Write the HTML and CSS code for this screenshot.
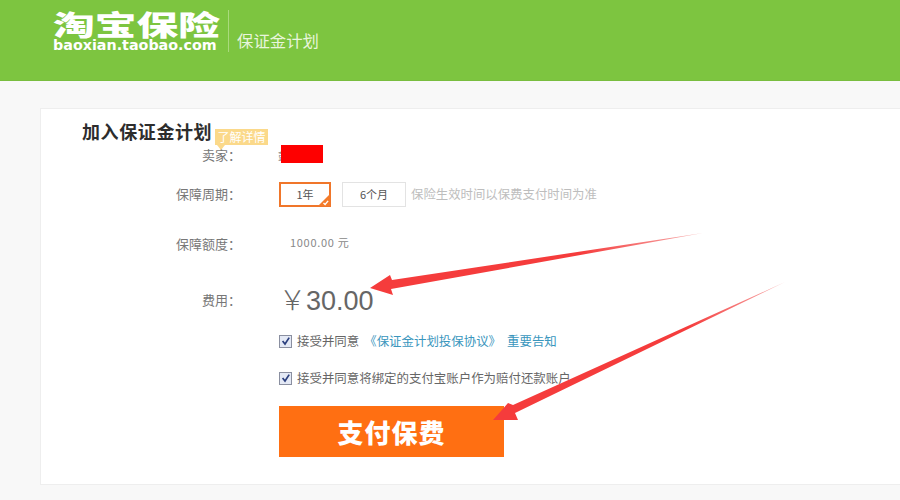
FILE: index.html
```html
<!DOCTYPE html>
<html lang="zh-CN">
<head>
<meta charset="utf-8">
<title>保证金计划</title>
<link rel="stylesheet" href="styles.css">
</head>
<body>
<header class="top">
  <div class="logo">
    <div class="logo-cn">淘宝保险</div>
    <div class="logo-en">baoxian.taobao.com</div>
  </div>
  <div class="top-title">保证金计划</div>
</header>
<main class="page">
  <section class="card">
    <div class="heading">
      <h1>加入保证金计划</h1>
      <span class="tip">了解详情</span>
    </div>
    <div class="row row-seller">
      <div class="label">卖家：</div>
      <div class="value"><span class="seller-char">彭</span><span class="redact"></span></div>
    </div>
    <div class="row row-period">
      <div class="label">保障周期：</div>
      <div class="value period">
        <span class="opt opt-on">1年<svg class="tick" viewBox="0 0 12 12" width="12" height="12"><path d="M12 0V12H0Z" fill="#f47b2a"/><path d="M5.5 9l1.6 1.5 3-3.6" fill="none" stroke="#fff" stroke-width="1.4"/></svg></span>
        <span class="opt">6个月</span>
        <span class="hint">保险生效时间以保费支付时间为准</span>
      </div>
    </div>
    <div class="row row-amount">
      <div class="label">保障额度：</div>
      <div class="value amount">1000.00 元</div>
    </div>
    <div class="row row-fee">
      <div class="label">费用：</div>
      <div class="value fee"><span class="yen">￥</span>30.00</div>
    </div>
    <label class="check check-a"><span class="box"><svg viewBox="0 0 12 12" width="12" height="12"><path d="M2.6 6l2.4 3 4.2-6.4" fill="none" stroke="#2b3f7e" stroke-width="1.7"/></svg></span>接受并同意<a class="link link-first">《保证金计划投保协议》</a><a class="link">重要告知</a></label>
    <label class="check check-b"><span class="box"><svg viewBox="0 0 12 12" width="12" height="12"><path d="M2.6 6l2.4 3 4.2-6.4" fill="none" stroke="#2b3f7e" stroke-width="1.7"/></svg></span>接受并同意将绑定的支付宝账户作为赔付还款账户</label>
    <button class="pay" type="button">支付保费</button>
  </section>
</main>
<svg class="arrows" viewBox="0 0 900 500" width="900" height="500" aria-hidden="true">
  <defs>
    <linearGradient id="fade1" gradientUnits="userSpaceOnUse" x1="703" y1="233" x2="580" y2="255"><stop offset="0" stop-color="#f7b0b0"/><stop offset="1" stop-color="#f53c3c"/></linearGradient>
    <linearGradient id="fade2" gradientUnits="userSpaceOnUse" x1="785" y1="282" x2="690" y2="332"><stop offset="0" stop-color="#f7b0b0"/><stop offset="1" stop-color="#f53c3c"/></linearGradient>
  </defs>
  <path d="M703 233 L392 280 L390 275 L370 288 L393 295 L391 289 Z" fill="url(#fade1)"/>
  <path d="M785 282 L513 405 L508 403 L493 420 L518 420 L515 413 Z" fill="url(#fade2)"/>
</svg>
</body>
</html>
```
FILE: styles.css
```css
* { box-sizing: border-box; }
html, body { margin: 0; padding: 0; }
body {
  width: 900px;
  height: 500px;
  overflow: hidden;
  position: relative;
  background: #f8f8f8;
  font-family: "Liberation Sans", "Noto Sans CJK SC", sans-serif;
  font-size: 12px;
  color: #666;
}
.top {
  height: 81px;
  background: #7dc540;
  display: flex;
  padding-left: 53px;
  color: #fff;
  border-bottom: 1px solid #79bd3f;
}
.logo {
  width: 176px;
  height: 42px;
  margin-top: 10px;
  border-right: 1px solid #a9da7d;
}
.logo-cn {
  font-family: "Noto Sans CJK SC", sans-serif;
  font-weight: 900;
  font-size: 28px;
  line-height: 28px;
  height: 28px;
  white-space: nowrap;
  transform: scaleX(1.49);
  transform-origin: left center;
}
.logo-en {
  font-family: "DejaVu Sans", sans-serif;
  font-weight: 700;
  font-size: 14.3px;
  line-height: 14px;
  white-space: nowrap;
}
.top-title {
  margin: 31px 0 0 8px;
  font-family: "Noto Sans CJK SC", sans-serif;
  font-size: 16.4px;
  line-height: 18px;
  color: #e8f5dc;
}
.page { padding: 27px 0 0 40px; }
.card {
  width: 880px;
  height: 377px;
  background: #fff;
  border: 1px solid #eee;
  padding: 12px 0 0 0;
  font-family: "Noto Sans CJK SC", sans-serif;
}
.heading {
  position: relative;
  padding-left: 41px;
  height: 20px;
}
.heading h1 {
  margin: 0;
  font-size: 18px;
  letter-spacing: 0.6px;
  line-height: 20px;
  font-weight: 700;
  color: #2d2d2d;
}
.tip {
  position: absolute;
  left: 174px;
  top: 8px;
  width: 53px;
  height: 16px;
  background: #fbd98a;
  color: #fff;
  font-size: 12px;
  line-height: 16px;
  text-align: center;
}
.tip::after {
  content: "";
  position: absolute;
  left: 2px;
  top: 16px;
  border-style: solid;
  border-width: 5px 4px 0 4px;
  border-color: #fbd98a transparent transparent transparent;
}
.row { display: flex; align-items: center; }
.label {
  width: 200px;
  text-align: right;
  color: #777;
  font-size: 13px;
  line-height: 18px;
  flex: none;
}
.value { margin-left: 38px; }
.row-seller { margin-top: 5px; height: 18px; }
.row-seller .value { display: flex; align-items: center; margin-left: 37px; }
.seller-char { color: #888; font-size: 10px; }
.redact {
  width: 42px;
  height: 18px;
  background: #fe0000;
  margin: -3px 0 0 -7px;
}
.row-period { margin-top: 17px; height: 26px; }
.period { display: flex; align-items: center; }
.opt {
  position: relative;
  width: 64px;
  height: 25px;
  border: 1px solid #e3e3e3;
  text-align: center;
  font-size: 11px;
  line-height: 23px;
  color: #555;
  margin-left: 11px;
}
.opt-on {
  width: 52px;
  margin-left: 0;
  border: 2px solid #f0762a;
  line-height: 21px;
}
.tick { position: absolute; right: -1px; bottom: -1px; }
.hint { margin-left: 5px; color: #bdbdbd; font-size: 12.4px; }
.row-amount { margin-top: 28px; height: 18px; }
.amount {
  font-size: 11px;
  letter-spacing: 0.7px;
  color: #888;
  margin: -4px 0 0 49px;
  line-height: 18px;
}
.row-fee { margin-top: 29px; height: 36px; }
.fee {
  font-size: 27px;
  line-height: 36px;
  color: #666;
  margin-left: 38px;
  font-family: "Liberation Sans", sans-serif;
}
.yen {
  font-family: "Noto Sans CJK SC", sans-serif;
  font-weight: 300;
}
.check {
  display: flex;
  align-items: center;
  margin-left: 238px;
  font-size: 12.45px;
  line-height: 18px;
  color: #666;
  height: 18px;
}
.check-a { margin-top: 14px; }
.check-b { margin-top: 19px; }
.box {
  width: 13px;
  height: 13px;
  border: 1px solid #8a8fa0;
  background: #e4e9f5;
  margin-right: 5px;
  flex: none;
  display: flex;
}
.box svg { display: block; margin: -0.5px; }
.link { color: #3a96bd; }
.link-first { margin: 0 6px 0 5px; }
.pay {
  display: block;
  margin: 19px 0 0 238px;
  width: 225px;
  height: 51px;
  border: 0;
  background: #ff6f12;
  color: #fff;
  font-family: "Noto Sans CJK SC", sans-serif;
  font-weight: 900;
  font-size: 26px;
  letter-spacing: 1px;
  padding: 0;
}
.arrows { position: absolute; left: 0; top: 0; pointer-events: none; }
```
